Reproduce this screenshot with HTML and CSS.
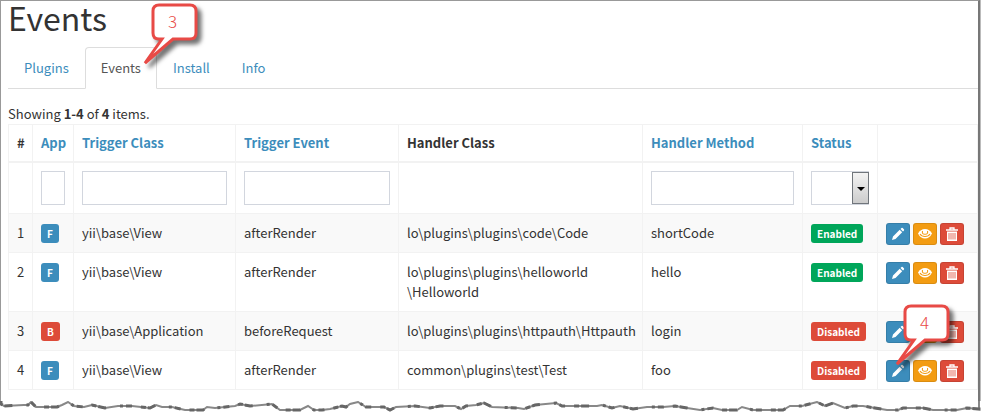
FILE: index.html
```html
<!DOCTYPE html>
<html lang="en">
<head>
<meta charset="utf-8">
<title>Events</title>
<link rel="stylesheet" href="styles.css">
</head>
<body>
<svg class="defs" aria-hidden="true">
  <symbol id="pencil" viewBox="0 0 14 14"><path fill="#fff" d="M1 13l1-3.500 6.700-6.700 2.500 2.500L4.500 12zM9.500 2l1-1q.6-.4 1.200.1l1.200 1.200q.5.600.1 1.200l-1 1z"/></symbol>
  <symbol id="eye" viewBox="0 0 14 14"><path fill="#fff" d="M0 6.500Q2.500 2 7 2t7 4.500q-2.500 5-7 5t-7-5z"/><path fill="none" stroke="#f39c12" stroke-width="1.100" d="M2 7q1.500 2.500 5 2.500T12 7M4.500 4q-.8 3.300 2.500 3.300T9.500 4"/></symbol>
  <symbol id="trash" viewBox="0 0 14 14"><path fill="none" stroke="#fff" stroke-width="1.300" d="M1 3h12M5 2.500V1h4v1.500"/><path fill="#fff" d="M2 4.500h10V14H2z"/><path stroke="#dd4b39" stroke-width=".8" d="M4 6v6.500M6 6v6.500M8 6v6.500M10 6v6.500"/></symbol>
</svg>
<main class="page">
  <h1>Events</h1>
  <nav class="tabs">
    <a href="#plugins">Plugins</a>
    <a href="#events" class="active">Events</a>
    <a href="#install">Install</a>
    <a href="#info">Info</a>
  </nav>
  <p class="summary">Showing <b>1-4</b> of <b>4</b> items.</p>
  <table>
    <colgroup><col class="c-num"><col class="c-app"><col class="c-class"><col class="c-event"><col><col class="c-method"><col class="c-status"><col class="c-actions"></colgroup>
    <thead>
      <tr><th>#</th><th><a href="#app">App</a></th><th><a href="#tc">Trigger Class</a></th><th><a href="#te">Trigger Event</a></th><th>Handler Class</th><th><a href="#hm">Handler Method</a></th><th><a href="#st">Status</a></th><th></th></tr>
      <tr class="filters"><td></td><td><input type="text" aria-label="App"></td><td><input type="text" aria-label="Trigger Class"></td><td><input type="text" aria-label="Trigger Event"></td><td></td><td><input type="text" aria-label="Handler Method"></td><td><div class="select"><select aria-label="Status"><option></option></select><span class="arrow"></span></div></td><td></td></tr>
    </thead>
    <tbody>
      <tr><td>1</td><td><span class="label blue">F</span></td><td>yii\base\View</td><td>afterRender</td><td>lo\plugins\plugins\code\Code</td><td>shortCode</td><td><span class="label green">Enabled</span></td>
        <td><div class="actions"><button class="blue" aria-label="Edit"><svg><use href="#pencil"/></svg></button><button class="orange" aria-label="View"><svg><use href="#eye"/></svg></button><button class="red" aria-label="Delete"><svg><use href="#trash"/></svg></button></div></td></tr>
      <tr><td>2</td><td><span class="label blue">F</span></td><td>yii\base\View</td><td>afterRender</td><td>lo\plugins\plugins\helloworld<br>\Helloworld</td><td>hello</td><td><span class="label green">Enabled</span></td>
        <td><div class="actions"><button class="blue" aria-label="Edit"><svg><use href="#pencil"/></svg></button><button class="orange" aria-label="View"><svg><use href="#eye"/></svg></button><button class="red" aria-label="Delete"><svg><use href="#trash"/></svg></button></div></td></tr>
      <tr><td>3</td><td><span class="label red">B</span></td><td>yii\base\Application</td><td>beforeRequest</td><td>lo\plugins\plugins\httpauth\Httpauth</td><td>login</td><td><span class="label red">Disabled</span></td>
        <td><div class="actions"><button class="blue" aria-label="Edit"><svg><use href="#pencil"/></svg></button><button class="orange" aria-label="View"><svg><use href="#eye"/></svg></button><button class="red" aria-label="Delete"><svg><use href="#trash"/></svg></button></div></td></tr>
      <tr><td>4</td><td><span class="label blue">F</span></td><td>yii\base\View</td><td>afterRender</td><td>common\plugins\test\Test</td><td>foo</td><td><span class="label red">Disabled</span></td>
        <td><div class="actions"><button class="blue" aria-label="Edit"><svg><use href="#pencil"/></svg></button><button class="orange" aria-label="View"><svg><use href="#eye"/></svg></button><button class="red" aria-label="Delete"><svg><use href="#trash"/></svg></button>
          <div class="callout four"><svg viewBox="0 0 60 76"><path d="M16 3h31q6 0 6 6v22q0 6-6 6H30L2 61 19 37h-3q-6 0-6-6V9q0-6 6-6z"/></svg><span>4</span></div></div></td></tr>
    </tbody>
  </table>
  <div class="callout three"><svg viewBox="0 0 60 76"><path d="M16 3h31q6 0 6 6v22q0 6-6 6H30L2 61 19 37h-3q-6 0-6-6V9q0-6 6-6z"/></svg><span>3</span></div>
</main>
<svg class="tear" viewBox="0 0 984 16" preserveAspectRatio="none" aria-hidden="true">
  <defs><path id="edge" d="M1 0V3L4 5 24 4 28 4 31 1 36 6 57 6 62 4 68 1 74 5 84 6 92 4 105 7 118 5 132 5 150 7 156 4 162 6 172 6 185 9H203L207 6 215 7 235 5 240 3 250 5 272 3 280 9H300L308 5 314 9 322 9 330 8 342 5 346 6 350 3 358 1 366 6 384 6 390 9 396 6 415 5 430 7 440 5 455 5 461 8 466 5 476 4 484 2 492 6 518 7 524 8 535 4 556 2 562 5 597 5 602 4 612 7 620 5 633 8 647 6 663 6 675 5 687 7 700 9 713 7 722 9H737L742 6 753 9H783L790 5 802 5 817 1 825 5 833 2 845 7 853 5 863 5 887 9H898L903 7H923L933 9 957 9 967 7 979 8V0"/></defs>
  <use href="#edge"/><use href="#edge" class="rough"/>
</svg>
</body>
</html>
```
FILE: styles.css
```css
* { box-sizing: border-box; }
body { margin: 0; background: #fff; color: #333; font: 13px/20px "Noto Sans CJK SC", "Open Sans", sans-serif; }
a { color: #3c8dbc; text-decoration: none; }
.defs { position: absolute; width: 0; height: 0; }
.page { position: relative; margin-right: 4px; padding: 0 0 11px 7px; border: solid #999; border-width: 1px 2px 0 1px; border-right-color: #777; box-shadow: 1px 0 #bbb; }
h1 { margin: 0 0 14px; font-size: 32px; line-height: 32px; font-weight: 400; }
.tabs { display: flex; border-bottom: 1px solid #ddd; }
.tabs a { padding: 10px 15px; margin-bottom: -1px; border: 1px solid transparent; border-radius: 4px 4px 0 0; }
.tabs .active { color: #555; background: #fff; border-color: #ddd #ddd #fff; }
.summary { margin: 15px 0 0; }
table { width: 100%; table-layout: fixed; border-collapse: collapse; }
th, td { padding: 9px 8px; border: 1px solid #f2f2f2; text-align: left; vertical-align: top; }
th { padding: 8px; border-bottom-width: 2px; }
.c-num { width: 24px; }
.c-app { width: 41px; }
.c-class { width: 162px; }
.c-event { width: 163px; }
.c-method { width: 160px; }
.c-status { width: 75px; }
.c-actions { width: 100px; }
tbody tr:nth-child(odd) { background: #f9f9f9; }
.filters td { padding: 8px; }
input, select { display: block; width: 100%; height: 34px; padding: 6px; border: 1px solid #d2d6de; border-radius: 0; background: #fff; font: inherit; appearance: none; }
.select { position: relative; }
.arrow { position: absolute; top: 1px; right: 0; width: 17px; height: 32px; border: 1px solid #70757b; background: linear-gradient(#f3f3f3, #ccc); pointer-events: none; }
.arrow::after { content: ""; position: absolute; top: 14px; left: 4px; border: solid transparent; border-width: 4px 4px 0; border-top-color: #000; }
.label { display: inline-block; margin-top: 1px; padding: 0 6px; border-radius: 3px; color: #fff; font-size: 10px; line-height: 19px; font-weight: 700; vertical-align: top; }
.blue { background: #3c8dbc; }
.green { background: #00a65a; }
.orange { background: #f39c12; }
.red { background: #dd4b39; }
.actions { position: relative; display: flex; gap: 3px; height: 20px; }
button { display: grid; place-items: center; width: 24px; height: 22px; padding: 0; border: 1px solid rgb(0 0 0 / 10%); border-radius: 3px; }
button svg { width: 14px; height: 14px; }
.callout { position: absolute; z-index: 2; width: 60px; height: 76px; }
.callout svg { display: block; width: 100%; height: 100%; overflow: visible; fill: #fff; stroke: #e84a46; stroke-width: 3; filter: drop-shadow(4px 4px 2px rgb(0 0 0 / 55%)); }
.callout span { position: absolute; top: 9px; left: 25px; color: #e84a46; font-size: 17px; font-weight: 300; }
.three { top: 1px; left: 142px; }
.four { top: -57px; left: 9px; }
.tear { display: block; width: 100%; height: 16px; fill: none; stroke: #888; stroke-width: 2; }
.rough { stroke: #666; stroke-width: 3; stroke-dasharray: 5 2 8 14 3 3 6 9; }
```
